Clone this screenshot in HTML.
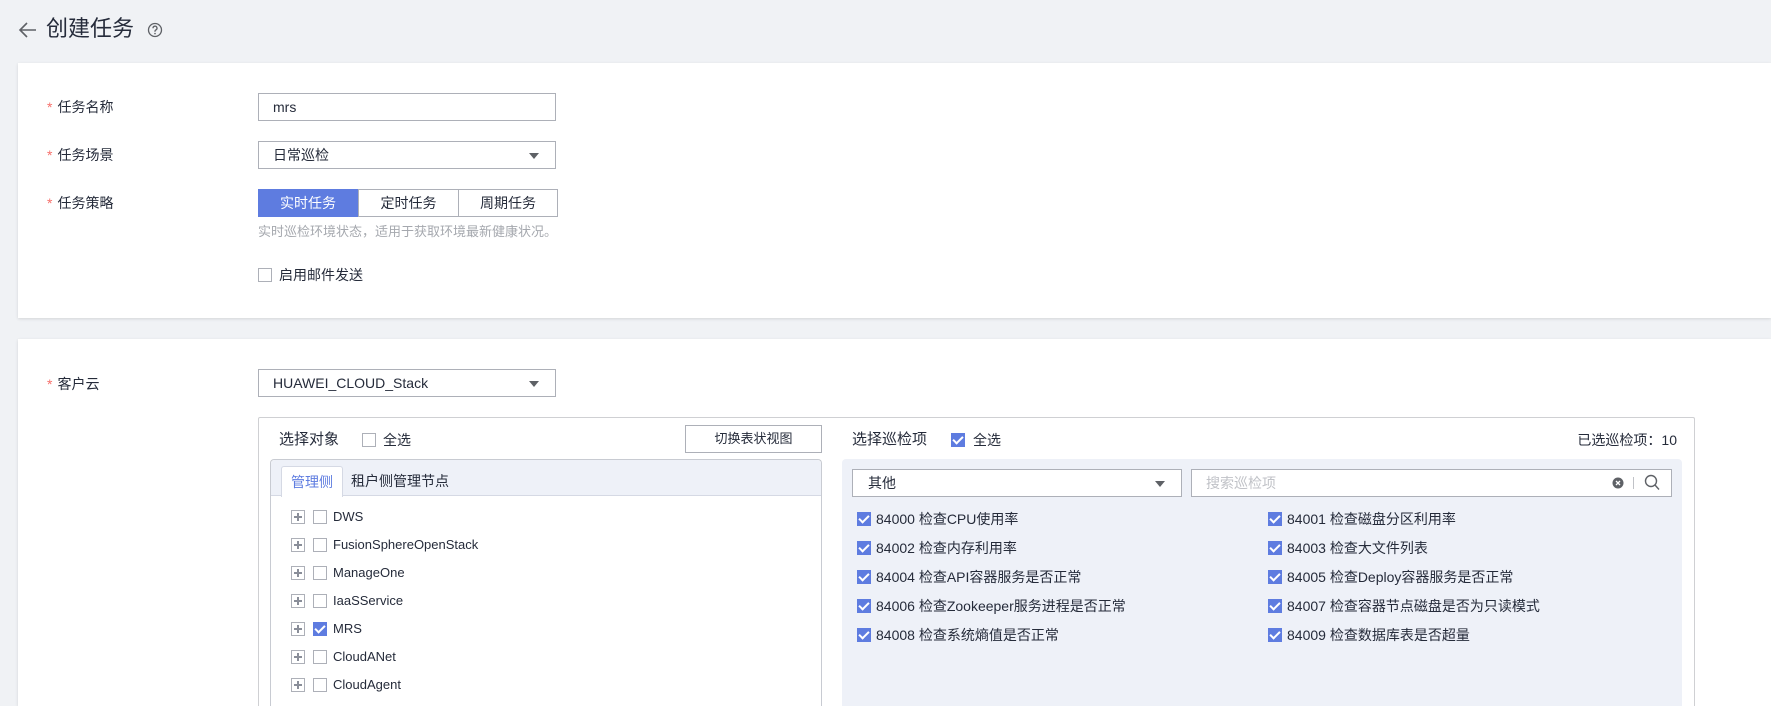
<!DOCTYPE html>
<html><head><meta charset="utf-8"><style>
*{box-sizing:border-box;margin:0;padding:0}
html,body{width:1771px;height:706px;overflow:hidden}
body{background:#f0f2f5;font-family:"Liberation Sans","Noto Sans CJK SC",sans-serif;color:#252b3a;position:relative;font-size:14px}
.a{position:absolute}
.card{position:absolute;left:18px;right:0;background:#fff;box-shadow:0 1px 3px rgba(0,0,0,.12)}
.lbl{position:absolute;left:47px;font-size:14px;line-height:20px}
.lbl b{color:#f66f6a;font-weight:normal;margin-right:5px}
.inp{position:absolute;left:258px;width:298px;height:28px;border:1px solid #adb0b8;background:#fff;font-size:14px;line-height:26px;padding-left:14px}
.tri{position:absolute;right:16px;top:11px;width:0;height:0;border-left:5px solid transparent;border-right:5px solid transparent;border-top:6px solid #5e6166}
.cb{position:absolute;width:14px;height:14px;border:1px solid #adb0b8;background:#fff}
.cbk{position:absolute;width:14px;height:14px;background:#5e7ce0}
.cbk:after{content:"";position:absolute;left:4px;top:1px;width:4px;height:8px;border:solid #fff;border-width:0 2px 2px 0;transform:rotate(45deg)}
.plus{position:absolute;width:14px;height:14px;border:1px solid #adb0b8}
.plus:before{content:"";position:absolute;left:2px;top:5px;width:8px;height:2px;background:#8a8e99}
.plus:after{content:"";position:absolute;left:5px;top:2px;width:2px;height:8px;background:#8a8e99}
.t{position:absolute;font-size:13px;line-height:16px;white-space:nowrap}
.it{position:absolute;font-size:14px;line-height:16px;white-space:nowrap}
</style></head><body>
<svg class="a" style="left:18px;top:21px" width="20" height="18" viewBox="0 0 20 18"><path d="M18 9H3M9 2L2 9l7 7" fill="none" stroke="#5e6166" stroke-width="1.6"/></svg>
<div class="a" style="left:46px;top:15px;font-size:22px;line-height:28px">创建任务</div>
<svg class="a" style="left:147px;top:22px" width="16" height="16" viewBox="0 0 16 16"><circle cx="8" cy="8" r="6.5" fill="none" stroke="#5e6166" stroke-width="1.3"/><path d="M6 6.2a2 2 0 1 1 2.8 1.8c-.6.3-.8.6-.8 1.3v.4" fill="none" stroke="#5e6166" stroke-width="1.3"/><circle cx="8" cy="11.6" r=".8" fill="#5e6166"/></svg>

<div class="card" style="top:63px;height:255px"></div>
<div class="lbl" style="top:97px"><b>*</b>任务名称</div>
<div class="inp" style="top:93px">mrs</div>
<div class="lbl" style="top:145px"><b>*</b>任务场景</div>
<div class="inp" style="top:141px">日常巡检<span class="tri"></span></div>
<div class="lbl" style="top:193px"><b>*</b>任务策略</div>
<div class="a" style="left:258px;top:189px;width:100px;height:28px;background:#5e7ce0;color:#fff;font-size:14px;line-height:28px;text-align:center">实时任务</div>
<div class="a" style="left:358px;top:189px;width:101px;height:28px;border:1px solid #adb0b8;font-size:14px;line-height:26px;text-align:center">定时任务</div>
<div class="a" style="left:458px;top:189px;width:100px;height:28px;border:1px solid #adb0b8;font-size:14px;line-height:26px;text-align:center">周期任务</div>
<div class="a" style="left:258px;top:224px;font-size:13px;color:#a5a8ae;line-height:16px">实时巡检环境状态，适用于获取环境最新健康状况。</div>
<div class="cb" style="left:258px;top:268px"></div>
<div class="a" style="left:279px;top:267px;font-size:14px;line-height:16px">启用邮件发送</div>

<div class="card" style="top:339px;height:367px"></div>
<div class="lbl" style="top:374px"><b>*</b>客户云</div>
<div class="inp" style="top:369px">HUAWEI_CLOUD_Stack<span class="tri"></span></div>

<div class="a" style="left:258px;top:417px;width:1437px;height:289px;border:1px solid #cfd0d3;border-bottom:none;border-radius:2px 2px 0 0"></div>
<div class="a" style="left:279px;top:431px;font-size:15px;line-height:18px">选择对象</div>
<div class="cb" style="left:362px;top:433px"></div>
<div class="a" style="left:383px;top:432px;font-size:14px;line-height:16px">全选</div>
<div class="a" style="left:685px;top:425px;width:137px;height:28px;border:1px solid #adb0b8;font-size:13px;line-height:26px;text-align:center">切换表状视图</div>
<div class="a" style="left:270px;top:459px;width:552px;height:247px;border:1px solid #c8cbd2;border-bottom:none;border-radius:4px 4px 0 0;background:#fff"></div>
<div class="a" style="left:271px;top:460px;width:550px;height:36px;background:#eef1f8;border-bottom:1px solid #d5d9e4;border-radius:4px 4px 0 0"></div>
<div class="a" style="left:281px;top:466px;width:62px;height:31px;background:#fff;border:1px solid #d5d9e4;border-bottom:none;border-radius:3px 3px 0 0;color:#5e7ce0;font-size:14px;line-height:30px;text-align:center">管理侧</div>
<div class="a" style="left:351px;top:473px;font-size:14px;line-height:16px">租户侧管理节点</div>

<div class="plus" style="left:291px;top:510px"></div><div class="cb" style="left:313px;top:510px"></div><div class="t" style="left:333px;top:509px">DWS</div>
<div class="plus" style="left:291px;top:538px"></div><div class="cb" style="left:313px;top:538px"></div><div class="t" style="left:333px;top:537px">FusionSphereOpenStack</div>
<div class="plus" style="left:291px;top:566px"></div><div class="cb" style="left:313px;top:566px"></div><div class="t" style="left:333px;top:565px">ManageOne</div>
<div class="plus" style="left:291px;top:594px"></div><div class="cb" style="left:313px;top:594px"></div><div class="t" style="left:333px;top:593px">IaaSService</div>
<div class="plus" style="left:291px;top:622px"></div><div class="cbk" style="left:313px;top:622px"></div><div class="t" style="left:333px;top:621px">MRS</div>
<div class="plus" style="left:291px;top:650px"></div><div class="cb" style="left:313px;top:650px"></div><div class="t" style="left:333px;top:649px">CloudANet</div>
<div class="plus" style="left:291px;top:678px"></div><div class="cb" style="left:313px;top:678px"></div><div class="t" style="left:333px;top:677px">CloudAgent</div>

<div class="a" style="left:852px;top:431px;font-size:15px;line-height:18px">选择巡检项</div>
<div class="cbk" style="left:951px;top:433px"></div>
<div class="a" style="left:973px;top:432px;font-size:14px;line-height:16px">全选</div>
<div class="a" style="right:94px;top:432px;font-size:14px;line-height:16px">已选巡检项：10</div>
<div class="a" style="left:842px;top:459px;width:840px;height:247px;background:#eef1f8;border-radius:4px 4px 0 0"></div>
<div class="a" style="left:852px;top:469px;width:330px;height:28px;border:1px solid #adb0b8;background:#fff;font-size:14px;line-height:26px;padding-left:15px">其他<span class="tri"></span></div>
<div class="a" style="left:1191px;top:469px;width:481px;height:28px;border:1px solid #adb0b8;background:#fff;font-size:14px;line-height:26px;padding-left:14px;color:#c0c2c7">搜索巡检项</div>
<svg class="a" style="left:1612px;top:477px" width="12" height="12" viewBox="0 0 12 12"><circle cx="6" cy="6" r="5.5" fill="#5e6166"/><path d="M4 4l4 4M8 4l-4 4" stroke="#fff" stroke-width="1.3"/></svg>
<div class="a" style="left:1633px;top:477px;width:1px;height:12px;background:#c0c2c7"></div>
<svg class="a" style="left:1644px;top:474px" width="16" height="17" viewBox="0 0 16 17"><circle cx="7" cy="7" r="5.5" fill="none" stroke="#5e6166" stroke-width="1.4"/><path d="M11 11l4 4.5" stroke="#5e6166" stroke-width="1.4"/></svg>

<div class="cbk" style="left:857px;top:512px"></div><div class="it" style="left:876px;top:511px">84000 检查CPU使用率</div>
<div class="cbk" style="left:1268px;top:512px"></div><div class="it" style="left:1287px;top:511px">84001 检查磁盘分区利用率</div>
<div class="cbk" style="left:857px;top:541px"></div><div class="it" style="left:876px;top:540px">84002 检查内存利用率</div>
<div class="cbk" style="left:1268px;top:541px"></div><div class="it" style="left:1287px;top:540px">84003 检查大文件列表</div>
<div class="cbk" style="left:857px;top:570px"></div><div class="it" style="left:876px;top:569px">84004 检查API容器服务是否正常</div>
<div class="cbk" style="left:1268px;top:570px"></div><div class="it" style="left:1287px;top:569px">84005 检查Deploy容器服务是否正常</div>
<div class="cbk" style="left:857px;top:599px"></div><div class="it" style="left:876px;top:598px">84006 检查Zookeeper服务进程是否正常</div>
<div class="cbk" style="left:1268px;top:599px"></div><div class="it" style="left:1287px;top:598px">84007 检查容器节点磁盘是否为只读模式</div>
<div class="cbk" style="left:857px;top:628px"></div><div class="it" style="left:876px;top:627px">84008 检查系统熵值是否正常</div>
<div class="cbk" style="left:1268px;top:628px"></div><div class="it" style="left:1287px;top:627px">84009 检查数据库表是否超量</div>
</body></html>
